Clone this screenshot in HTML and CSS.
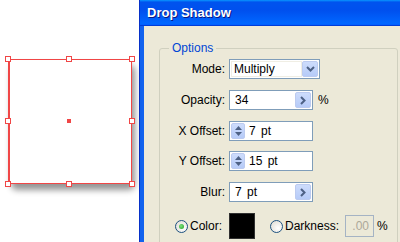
FILE: index.html
```html
<html>

<head>
    <meta charset="UTF-8">
    <link rel="stylesheet" href="styles.css">
</head>

<body>
    <div class="screen">
        <div class="stage">
            <div class="shape">
                <div class="selection"></div>
                <span class="handle h-tl"></span>
                <span class="handle h-tc"></span>
                <span class="handle h-tr"></span>
                <span class="handle h-ml"></span>
                <span class="handle h-mr"></span>
                <span class="handle h-bl"></span>
                <span class="handle h-bc"></span>
                <span class="handle h-br"></span>
                <span class="center-dot"></span>
            </div>
        </div>

        <div class="window">
            <div class="titlebar">Drop Shadow</div>
            <div class="dialog">
                <fieldset class="group">
                    <legend>Options</legend>
                    <div class="rows">
                        <div class="row">
                            <span class="label">Mode:</span>
                            <div class="field combo">
                                <span class="value">Multiply</span>
                                <span class="btn">
                                    <svg width="9" height="6" viewBox="0 0 9 6"><path d="M1 1 L4.5 4.5 L8 1" stroke="#4d6185" stroke-width="2" fill="none"/></svg>
                                </span>
                            </div>
                        </div>
                        <div class="row">
                            <span class="label">Opacity:</span>
                            <div class="field num">
                                <span class="value">34</span>
                                <span class="btn">
                                    <svg width="6" height="9" viewBox="0 0 6 9"><path d="M1 1 L4.5 4.5 L1 8" stroke="#4d6185" stroke-width="2" fill="none"/></svg>
                                </span>
                            </div>
                            <span class="unit">%</span>
                        </div>
                        <div class="row tight">
                            <span class="label">X Offset:</span>
                            <div class="field num">
                                <span class="spin">
                                    <svg width="7" height="12" viewBox="0 0 7 12"><path d="M0 5 L3.5 1 L7 5 Z M0 7 L3.5 11 L7 7 Z" fill="#4d6185"/></svg>
                                </span>
                                <span class="value">7 pt</span>
                            </div>
                        </div>
                        <div class="row">
                            <span class="label">Y Offset:</span>
                            <div class="field num">
                                <span class="spin">
                                    <svg width="7" height="12" viewBox="0 0 7 12"><path d="M0 5 L3.5 1 L7 5 Z M0 7 L3.5 11 L7 7 Z" fill="#4d6185"/></svg>
                                </span>
                                <span class="value">15 pt</span>
                            </div>
                        </div>
                        <div class="row">
                            <span class="label">Blur:</span>
                            <div class="field num">
                                <span class="value">7 pt</span>
                                <span class="btn">
                                    <svg width="6" height="9" viewBox="0 0 6 9"><path d="M1 1 L4.5 4.5 L1 8" stroke="#4d6185" stroke-width="2" fill="none"/></svg>
                                </span>
                            </div>
                        </div>
                        <div class="row color-row">
                            <span class="radio checked"></span>
                            <span class="radio-label">Color:</span>
                            <span class="swatch"></span>
                            <span class="radio second"></span>
                            <span class="radio-label">Darkness:</span>
                            <span class="field disabled">.00</span>
                            <span class="unit">%</span>
                        </div>
                    </div>
                </fieldset>
            </div>
        </div>
    </div>
</body>

</html>
```

FILE: styles.css
```css
* {
    box-sizing: border-box;
}
html, body {
    margin: 0;
    overflow: hidden;
}
body {
    font-family: "Liberation Sans", Arial, sans-serif;
    font-size: 12px;
    color: #000;
}
.screen {
    display: flex;
    width: 400px;
    height: 242px;
    overflow: hidden;
}

/* canvas */
.stage {
    width: 139px;
    background: #fff;
    padding: 59px 0 0 8px;
}
.shape {
    position: relative;
    width: 124px;
    height: 125px;
    background: #fff;
    border-radius: 6px;
    box-shadow: 3px 6px 6px rgba(0, 0, 0, 0.42);
}
.selection {
    position: absolute;
    inset: 0;
    border: 1px solid #f04646;
    border-left-width: 2px;
}
.handle {
    position: absolute;
    width: 6px;
    height: 6px;
    background: #fff;
    border: 1px solid #f04646;
}
.h-tl, .h-ml, .h-bl { left: -3px; }
.h-tc, .h-bc { left: 58px; }
.h-tr, .h-mr, .h-br { right: -3px; }
.h-tl, .h-tc, .h-tr { top: -3px; }
.h-ml, .h-mr { top: 59px; }
.h-bl, .h-bc, .h-br { bottom: -3px; }
.center-dot {
    position: absolute;
    left: 59px;
    top: 60px;
    width: 4px;
    height: 4px;
    background: #f04646;
}

/* window */
.window {
    flex: 1;
    display: flex;
    flex-direction: column;
    border-left: 1px solid #0731c8;
    overflow: hidden;
}
.titlebar {
    height: 26px;
    line-height: 25px;
    padding-left: 7px;
    color: #fff;
    font-weight: bold;
    font-size: 13px;
    text-shadow: 1px 1px #0a1883;
    background: linear-gradient(#0997ff, #0053ee 8%, #0050ee 40%, #0066ff 88%, #0066ff 93%, #005bff 95%, #003dd7 96%, #003dd7);
}
.dialog {
    flex: 1;
    min-height: 0;
    overflow: hidden;
    background: #ece9d8;
    border-left: 4px solid #1162ee;
    padding: 15px 0 0 15px;
}
.group {
    width: 239px;
    height: 214px;
    margin: 0;
    padding: 0;
    border: 1px solid #d0d0bf;
    border-radius: 3px;
}
.group legend {
    margin-left: 9px;
    padding: 0 3px;
    line-height: 14px;
    color: #0046d5;
}
.rows {
    padding-top: 4px;
}
.row {
    display: flex;
    align-items: center;
    height: 20px;
    margin-bottom: 11px;
}
.row.tight {
    margin-bottom: 10px;
}
.label {
    width: 65px;
    margin-right: 4px;
    text-align: right;
}
.field {
    display: flex;
    align-items: stretch;
    height: 20px;
    background: #fff;
    border: 1px solid #7f9db9;
}
.combo {
    width: 91px;
    padding: 1px;
}
.combo .value {
    flex: 1;
    border: 1px solid #f0eee4;
    padding-left: 2px;
    line-height: 15px;
}
.num {
    width: 84px;
    padding: 1px;
}
.num .value {
    flex: 1;
    padding-left: 4px;
    line-height: 16px;
    word-spacing: 2px;
}
.btn, .spin {
    display: flex;
    align-items: center;
    justify-content: center;
    width: 16px;
    background: linear-gradient(#cddcfc, #b6cbf8);
    border: 1px solid #bccbf0;
    border-radius: 2px;
}
.spin {
    width: 14px;
}
.unit {
    margin-left: 5px;
}
.color-row {
    height: 26px;
    margin-bottom: 0;
    padding-left: 15px;
}
.radio {
    width: 13px;
    height: 13px;
    border: 1px solid #1c5180;
    border-radius: 50%;
    background: radial-gradient(circle at 65% 65%, #fff, #dcd9d0);
    display: flex;
    align-items: center;
    justify-content: center;
}
.radio.checked::after {
    content: "";
    width: 5px;
    height: 5px;
    border-radius: 50%;
    background: radial-gradient(circle at 40% 40%, #7ee07e, #21a121);
}
.radio-label {
    margin-left: 2px;
}
.swatch {
    width: 26px;
    height: 26px;
    margin-left: 7px;
    background: #000;
    border: 1px solid #303030;
}
.radio.second {
    margin-left: 15px;
}
.disabled {
    width: 29px;
    height: 22px;
    margin-left: 6px;
    justify-content: flex-end;
    align-items: center;
    padding-right: 4px;
    color: #aca899;
    background: #ece9d8;
    border-color: #a5b3c4;
}
.disabled + .unit {
    margin-left: 3px;
}
```
